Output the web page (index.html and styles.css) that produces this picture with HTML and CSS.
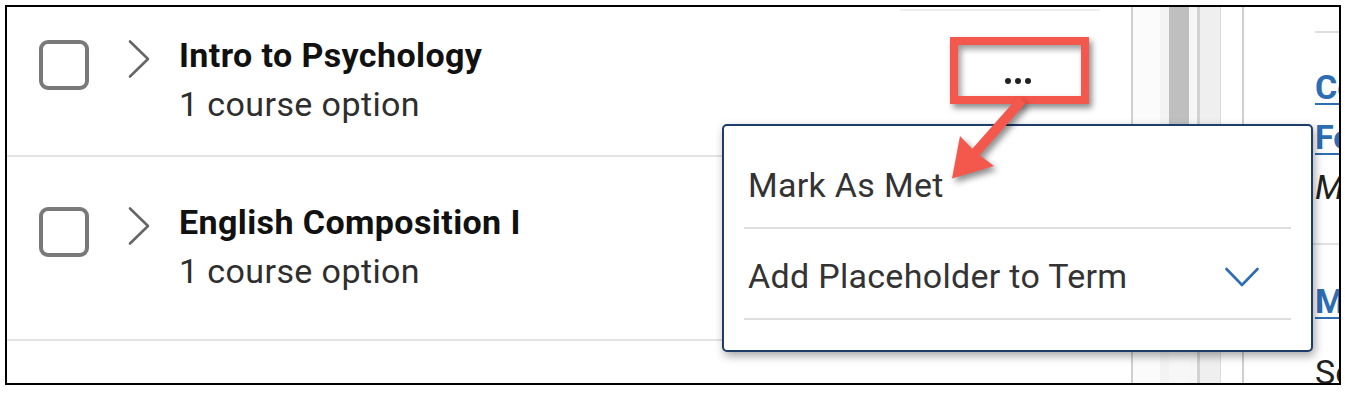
FILE: index.html
```html
<!DOCTYPE html>
<html lang="en">
<head>
<meta charset="utf-8">
<title>Requirements</title>
<link rel="stylesheet" href="styles.css">
</head>
<body>
<div class="page">
  <div class="frame">
    <div class="list">
      <div class="top-edge"></div>
      <div class="row row-first">
        <span class="checkbox"></span>
        <svg class="chev" width="24" height="40" viewBox="0 0 24 40"><path d="M3 2.5 L21 20 L3 37.5" fill="none" stroke="#666" stroke-width="2.6" stroke-linecap="round" stroke-linejoin="round"/></svg>
        <div class="texts">
          <div class="title">Intro to Psychology</div>
          <div class="sub">1 course option</div>
        </div>
        <button class="dots" type="button" aria-label="More actions"><i></i><i></i><i></i></button>
      </div>
      <div class="row row-second">
        <span class="checkbox"></span>
        <svg class="chev" width="24" height="40" viewBox="0 0 24 40"><path d="M3 2.5 L21 20 L3 37.5" fill="none" stroke="#666" stroke-width="2.6" stroke-linecap="round" stroke-linejoin="round"/></svg>
        <div class="texts">
          <div class="title">English Composition I</div>
          <div class="sub">1 course option</div>
        </div>
      </div>
    </div>
    <div class="strip s-line"></div>
    <div class="strip s-a"></div>
    <div class="strip s-b"></div>
    <div class="strip s-track"><div class="thumb"></div></div>
    <div class="strip s-c"></div>
    <div class="strip s-line2"></div>
    <div class="strip s-d"></div>
    <div class="strip s-line3"></div>
    <div class="strip s-e"></div>
    <div class="strip s-line"></div>
    <div class="panel">
      <div class="panel-top"></div>
      <div class="panel-block">
        <a class="plink" href="#">Co<br>Fo</a>
        <div class="pital">M</div>
      </div>
      <div class="panel-rule"></div>
      <a class="plink plink-2" href="#">M</a>
      <div class="ptext">Se</div>
    </div>
  </div>

  <div class="menu">
    <div class="menu-item">Mark As Met</div>
    <div class="menu-item menu-item-split">
      <span>Add Placeholder to Term</span>
      <svg class="down" width="34" height="20" viewBox="0 0 34 20"><path d="M1.5 2 L17 18 L32.5 2" fill="none" stroke="#2c6db4" stroke-width="2.6" stroke-linecap="round" stroke-linejoin="round"/></svg>
    </div>
  </div>

  <div class="callout"></div>
  <svg class="arrow" width="1345" height="394" viewBox="0 0 1345 394">
    <polygon points="952,178.5 960,136 972.3,148.7 1018.3,96.7 1025.7,103.3 979.7,155.3 994,166" fill="#f4574b"/>
  </svg>
</div>
</body>
</html>
```

FILE: styles.css
```css
* { box-sizing: border-box; }

html, body {
  margin: 0;
  padding: 0;
  background: #ffffff;
}

body {
  font-family: Roboto, "Liberation Sans", Arial, sans-serif;
}

.page {
  position: relative;
  width: 1345px;
  height: 394px;
  padding: 5px;
  overflow: hidden;
}

.frame {
  width: 1336px;
  height: 380px;
  border: 2px solid #000;
  display: flex;
  overflow: hidden;
  background: #fff;
}

/* ---------- list column ---------- */
.list {
  width: 1124px;
  flex: none;
  display: flex;
  flex-direction: column;
}

.top-edge {
  margin: 2px 0 0 893px;
  width: 200px;
  height: 2px;
  background: #eeeeee;
}

.row {
  display: flex;
  align-items: flex-start;
  padding-left: 32px;
  border-bottom: 2px solid #e4e4e4;
}

.row-first { padding-top: 24px; padding-bottom: 31px; }
.row-second { padding-top: 45px; padding-bottom: 48px; }

.checkbox {
  flex: none;
  width: 50px;
  height: 50px;
  margin-top: 5px;
  border: 4px solid #797979;
  border-radius: 9px;
  background: #fff;
}

.chev {
  flex: none;
  margin: 4px 0 0 38px;
  display: block;
}

.texts {
  margin-left: 28px;
}

.title {
  font-size: 34px;
  line-height: 40px;
  letter-spacing: 0.4px;
  font-weight: 700;
  color: #111;
}

.sub {
  margin-top: 9px;
  font-size: 34px;
  line-height: 40px;
  letter-spacing: 0.4px;
  color: #2e2e2e;
}

.dots {
  margin: 26px 83px 0 auto;
  width: 60px;
  height: 40px;
  border: 0;
  padding: 0;
  background: transparent;
  display: flex;
  align-items: center;
  justify-content: center;
  gap: 4px;
}

.dots i {
  width: 6px;
  height: 6px;
  border-radius: 50%;
  background: #222;
}

/* ---------- scroll strips ---------- */
.strip { flex: none; height: 100%; }
.s-line { width: 2px; background: #cfcfcf; }
.s-a { width: 27px; background: #fbfbfb; }
.s-b { width: 9px; background: #f3f3f3; }
.s-track { width: 20px; background: #f7f7f7; }
.s-track .thumb { height: 200px; background: #bfbfbf; }
.s-c { width: 8px; background: #f6f6f6; }
.s-line2 { width: 3px; background: #d2d2d2; }
.s-d { width: 20px; background: #efefef; }
.s-line3 { width: 1px; background: #dcdcdc; }
.s-e { width: 21px; background: #ffffff; }

/* ---------- right panel ---------- */
.panel {
  flex: none;
  width: 95px;
  padding-left: 71px;
  overflow: hidden;
  white-space: nowrap;
  font-size: 34px;
  line-height: 50px;
  color: #222;
}

.panel-top {
  margin-top: 24px;
  border-top: 2px solid #dddddd;
}

.panel-block {
  margin-top: 29px;
}

.plink {
  display: block;
  color: #2c6db4;
  font-weight: 700;
  text-decoration: underline;
  text-decoration-thickness: 2px;
  text-underline-offset: 4px;
}

.pital {
  font-style: italic;
}

.panel-rule {
  margin-top: 31px;
  margin-left: -71px;
  border-top: 2px solid #e2e2e2;
}

.plink-2 { margin-top: 31px; }

.ptext { margin-top: 21px; }

/* ---------- overlay menu ---------- */
.menu {
  position: absolute;
  left: 722px;
  top: 124px;
  width: 591px;
  height: 228px;
  border: 2px solid #1f3d6a;
  border-radius: 5px;
  background: #fff;
  padding: 12px 20px 30px;
  box-shadow: 2px 4px 10px rgba(0, 0, 0, 0.35);
}

.menu-item {
  padding: 28px 32px 22px 4px;
  border-bottom: 2px solid #dedede;
  font-size: 34px;
  line-height: 39px;
  letter-spacing: 0.3px;
  color: #333;
}

.menu-item-split {
  display: flex;
  align-items: center;
  justify-content: space-between;
}

.down { display: block; }

/* ---------- annotation ---------- */
.callout {
  position: absolute;
  left: 950px;
  top: 37px;
  width: 139px;
  height: 67px;
  border: 8px solid #f4574b;
  box-shadow: 3px 4px 6px rgba(0, 0, 0, 0.45), inset 3px 4px 6px rgba(0, 0, 0, 0.4);
}

.arrow {
  position: absolute;
  left: 0;
  top: 0;
  pointer-events: none;
  filter: drop-shadow(3px 4px 3px rgba(0, 0, 0, 0.45));
}
```
